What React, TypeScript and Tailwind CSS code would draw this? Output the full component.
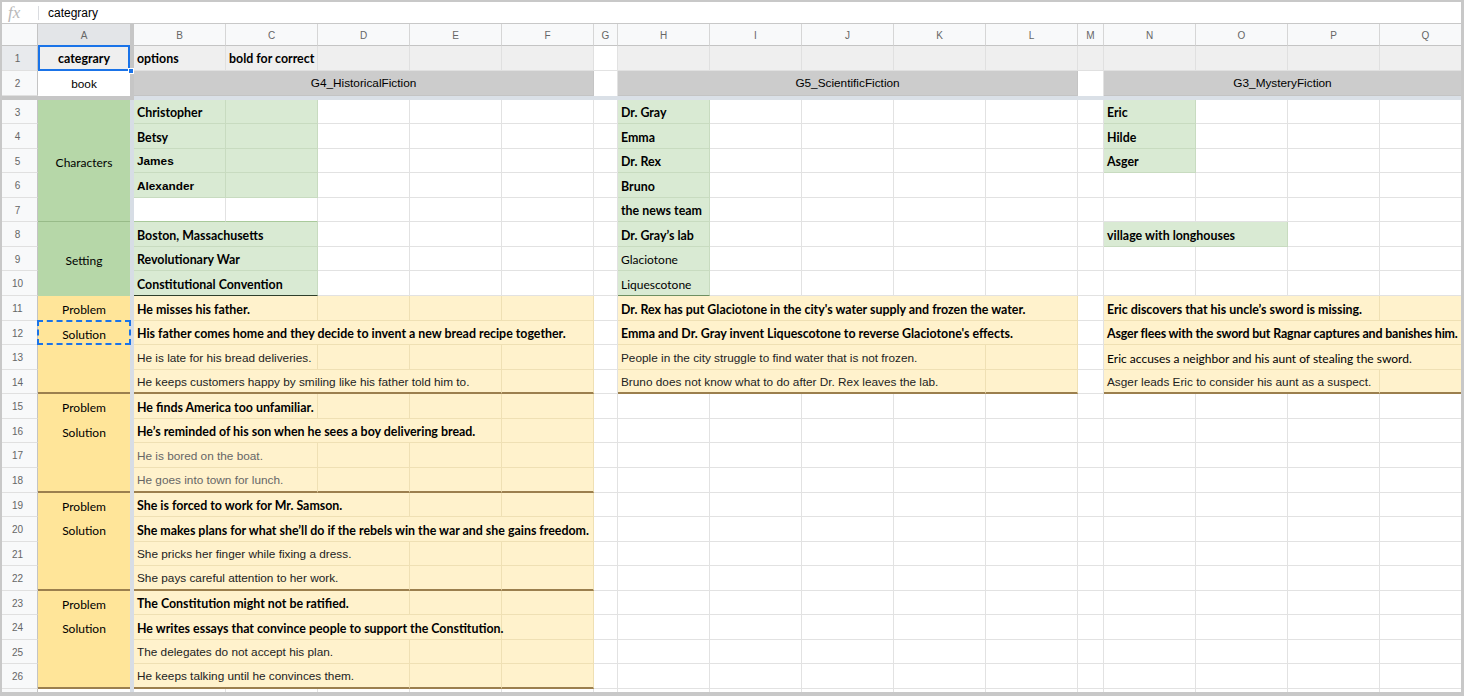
import React from 'react';

const GRID =
  'grid grid-cols-[36px_92px_4px_92px_92px_92px_92px_92px_24px_92px_92px_92px_92px_92px_26px_92px_92px_92px_92px]';

const SPAN: Record<number, string> = {
  1: 'col-span-1',
  2: 'col-span-2',
  3: 'col-span-3',
  4: 'col-span-4',
  5: 'col-span-5',
};

const F = {
  cb: "font-['Lato',sans-serif] font-bold text-[12.4px] text-black",
  cr: "font-['Lato',sans-serif] text-[12px] text-black",
  ab: "font-['Liberation_Sans',Arial,sans-serif] font-bold text-[11.8px] text-black",
  ar: "font-['Liberation_Sans',Arial,sans-serif] text-[11.8px] text-[#222]",
  ag: "font-['Liberation_Sans',Arial,sans-serif] text-[11.8px] text-[#666]",
};

const W = 'bg-white border-r border-b border-[#e2e2e2]';
const G3 = 'bg-[#d9ead3] border-r border-b border-[#c8dbc0]';
const G3D = 'bg-[#d9ead3] border-r border-r-[#c8dbc0] border-b border-b-[#2f3f2b]';
const G3H = 'bg-[#d9ead3] border-r border-r-[#c8dbc0] border-b border-b-[#6e8f62]';
const G2 = 'bg-[#b6d7a8]';
const G2L = 'bg-[#b6d7a8] border-b border-b-[#98bb89]';
const W7 = 'bg-white border-r border-r-[#e2e2e2] border-b border-b-[#a9c99b]';
const Y3 = 'bg-[#fff2cc] border-r border-b border-[#efe0b4]';
const Y3B = 'bg-[#fff2cc] border-r border-r-[#efe0b4] border-b-2 border-b-[#9b7f4e]';
const Y2 = 'bg-[#ffe599]';
const Y2B = 'bg-[#ffe599] border-b-2 border-b-[#9b7f4e]';
const R1 = 'bg-[#efefef] border-r border-b border-[#e0e0e0]';
const R2 = 'bg-[#cccccc] border-r border-b border-[#c4c4c4]';

type Spec = {
  s?: number;
  bg?: string;
  t?: string;
  f?: keyof typeof F;
  center?: boolean;
  ov?: React.ReactNode;
  x?: string;
};

const HEIGHTS = [
  'h-[24px]', 'h-[25px]', 'h-[24px]', 'h-[25px]', 'h-[24px]', 'h-[25px]', 'h-[24px]', 'h-[25px]',
  'h-[25px]', 'h-[24px]', 'h-[25px]', 'h-[24px]', 'h-[25px]', 'h-[24px]', 'h-[25px]', 'h-[25px]',
  'h-[24px]', 'h-[25px]', 'h-[24px]', 'h-[25px]', 'h-[24px]', 'h-[25px]', 'h-[24px]', 'h-[25px]',
];

function Cell({ c }: { c: Spec }) {
  const cls = [
    SPAN[c.s ?? 1],
    c.bg ?? W,
    'flex items-center whitespace-nowrap leading-[15px] min-w-0 pt-[2px]',
    c.center ? 'justify-center' : 'pl-[3px]',
    c.f ? F[c.f] : '',
    c.t || c.ov ? 'relative z-[1] overflow-visible' : 'overflow-hidden',
    c.x ?? '',
  ].join(' ');
  return (
    <div className={cls}>
      {c.t}
      {c.ov}
    </div>
  );
}

function fill(cells: Record<number, Spec>) {
  const out: { col: number; spec: Spec }[] = [];
  let col = 1;
  while (col <= 18) {
    if (col === 2) {
      col++;
      continue;
    }
    const spec = cells[col] ?? {};
    out.push({ col, spec });
    col += spec.s ?? 1;
  }
  return out;
}

function RowNum({ n, sel }: { n: React.ReactNode; sel?: boolean }) {
  return (
    <div
      className={`${
        sel ? 'bg-[#e8eaed]' : 'bg-[#f8f9fa]'
      } border-r border-r-[#c4c4c4] border-b border-b-[#e0e0e0] flex items-center justify-center pr-[4px] pt-[1px] font-['Liberation_Sans',Arial,sans-serif] text-[10px] text-[#666]`}
    >
      {n}
    </div>
  );
}

function DataRow({ n, h, cells }: { n: React.ReactNode; h: string; cells: Record<number, Spec> }) {
  const list = fill(cells);
  return (
    <div className={`${GRID} ${h}`}>
      <RowNum n={n} />
      {list.map(({ col, spec }) =>
        col === 1 ? (
          <React.Fragment key={col}>
            <Cell c={spec} />
            <div className="bg-[#d7dde5]" />
          </React.Fragment>
        ) : (
          <Cell key={col} c={spec} />
        )
      )}
    </div>
  );
}

const SolutionMarquee = (
  <div className="absolute left-[-1px] right-[-1px] top-[-1px] bottom-[0px] border-2 border-dashed border-[#1a73e8] z-10" />
);

const ROWS: Record<number, Spec>[] = [
  // 3
  { 1: { bg: G2 }, 3: { t: 'Christopher', f: 'cb', bg: G3 }, 4: { bg: G3 }, 9: { t: 'Dr. Gray', f: 'cb', bg: G3 }, 15: { t: 'Eric', f: 'cb', bg: G3 } },
  // 4
  { 1: { bg: G2 }, 3: { t: 'Betsy', f: 'cb', bg: G3 }, 4: { bg: G3 }, 9: { t: 'Emma', f: 'cb', bg: G3 }, 15: { t: 'Hilde', f: 'cb', bg: G3 } },
  // 5
  { 1: { bg: G2, t: 'Characters', f: 'cr', center: true }, 3: { t: 'James', f: 'ab', bg: G3 }, 4: { bg: G3 }, 9: { t: 'Dr. Rex', f: 'cb', bg: G3 }, 15: { t: 'Asger', f: 'cb', bg: G3 } },
  // 6
  { 1: { bg: G2 }, 3: { t: 'Alexander', f: 'ab', bg: G3 }, 4: { bg: G3 }, 9: { t: 'Bruno', f: 'cb', bg: G3 } },
  // 7
  { 1: { bg: G2L }, 3: { bg: W7 }, 4: { bg: W7 }, 9: { t: 'the news team', f: 'cb', bg: G3 } },
  // 8
  { 1: { bg: G2 }, 3: { t: 'Boston, Massachusetts', f: 'cb', bg: G3, s: 2 }, 9: { t: 'Dr. Gray\u2019s lab', f: 'cb', bg: G3 }, 15: { t: 'village with longhouses', f: 'cb', bg: G3, s: 2 } },
  // 9
  { 1: { bg: G2, t: 'Setting', f: 'cr', center: true }, 3: { t: 'Revolutionary War', f: 'cb', bg: G3, s: 2 }, 9: { t: 'Glaciotone', f: 'cr', bg: G3 } },
  // 10
  { 1: { bg: G2 }, 3: { t: 'Constitutional Convention', f: 'cb', bg: G3D, s: 2 }, 9: { t: 'Liquescotone', f: 'cr', bg: G3H } },
  // 11
  {
    1: { bg: Y2, t: 'Problem', f: 'cr', center: true },
    3: { t: 'He misses his father.', f: 'cb', bg: Y3, s: 2 },
    5: { bg: Y3 }, 6: { bg: Y3 }, 7: { bg: Y3 },
    9: { t: "Dr. Rex has put Glaciotone in the city's water supply and frozen the water.", f: 'cb', bg: Y3, s: 5 },
    15: { t: 'Eric discovers that his uncle\u2019s sword is missing.', f: 'cb', bg: Y3, s: 3 },
    18: { bg: Y3 },
  },
  // 12
  {
    1: { bg: Y2, t: 'Solution', f: 'cr', center: true, ov: SolutionMarquee },
    3: { t: 'His father comes home and they decide to invent a new bread recipe together.', f: 'cb', bg: Y3, s: 5 },
    9: { t: "Emma and Dr. Gray invent Liquescotone to reverse Glaciotone's effects.", f: 'cb', bg: Y3, s: 5 },
    15: { t: 'Asger flees with the sword but Ragnar captures and banishes him.', f: 'cb', bg: Y3, s: 4, x: 'tracking-[-0.15px]' },
  },
  // 13
  {
    1: { bg: Y2 },
    3: { t: 'He is late for his bread deliveries.', f: 'ar', bg: Y3, s: 2 },
    5: { bg: Y3 }, 6: { bg: Y3 }, 7: { bg: Y3 },
    9: { t: 'People in the city struggle to find water that is not frozen.', f: 'ar', bg: Y3, s: 4 },
    13: { bg: Y3 },
    15: { t: 'Eric accuses a neighbor and his aunt of stealing the sword.', f: 'cr', bg: Y3, s: 4 },
  },
  // 14
  {
    1: { bg: Y2B },
    3: { t: 'He keeps customers happy by smiling like his father told him to.', f: 'ar', bg: Y3B, s: 4 },
    7: { bg: Y3B },
    9: { t: 'Bruno does not know what to do after Dr. Rex leaves the lab.', f: 'ar', bg: Y3B, s: 4 },
    13: { bg: Y3B },
    15: { t: 'Asger leads Eric to consider his aunt as a suspect.', f: 'ar', bg: Y3B, s: 3 },
    18: { bg: Y3B },
  },
  // 15
  { 1: { bg: Y2, t: 'Problem', f: 'cr', center: true }, 3: { t: 'He finds America too unfamiliar.', f: 'cb', bg: Y3, s: 2 }, 5: { bg: Y3 }, 6: { bg: Y3 }, 7: { bg: Y3 } },
  // 16
  { 1: { bg: Y2, t: 'Solution', f: 'cr', center: true }, 3: { t: 'He\u2019s reminded of his son when he sees a boy delivering bread.', f: 'cb', bg: Y3, s: 4 }, 7: { bg: Y3 } },
  // 17
  { 1: { bg: Y2 }, 3: { t: 'He is bored on the boat.', f: 'ag', bg: Y3, s: 2 }, 5: { bg: Y3 }, 6: { bg: Y3 }, 7: { bg: Y3 } },
  // 18
  { 1: { bg: Y2B }, 3: { t: 'He goes into town for lunch.', f: 'ag', bg: Y3B, s: 2 }, 5: { bg: Y3B }, 6: { bg: Y3B }, 7: { bg: Y3B } },
  // 19
  { 1: { bg: Y2, t: 'Problem', f: 'cr', center: true }, 3: { t: 'She is forced to work for Mr. Samson.', f: 'cb', bg: Y3, s: 3 }, 6: { bg: Y3 }, 7: { bg: Y3 } },
  // 20
  { 1: { bg: Y2, t: 'Solution', f: 'cr', center: true }, 3: { t: 'She makes plans for what she\u2019ll do if the rebels win the war and she gains freedom.', f: 'cb', bg: Y3, s: 5 } },
  // 21
  { 1: { bg: Y2 }, 3: { t: 'She pricks her finger while fixing a dress.', f: 'ar', bg: Y3, s: 3 }, 6: { bg: Y3 }, 7: { bg: Y3 } },
  // 22
  { 1: { bg: Y2B }, 3: { t: 'She pays careful attention to her work.', f: 'ar', bg: Y3B, s: 3 }, 6: { bg: Y3B }, 7: { bg: Y3B } },
  // 23
  { 1: { bg: Y2, t: 'Problem', f: 'cr', center: true }, 3: { t: 'The Constitution might not be ratified.', f: 'cb', bg: Y3, s: 3 }, 6: { bg: Y3 }, 7: { bg: Y3 } },
  // 24
  { 1: { bg: Y2, t: 'Solution', f: 'cr', center: true }, 3: { t: 'He writes essays that convince people to support the Constitution.', f: 'cb', bg: Y3, s: 4 }, 7: { bg: Y3 } },
  // 25
  { 1: { bg: Y2 }, 3: { t: 'The delegates do not accept his plan.', f: 'ar', bg: Y3, s: 3 }, 6: { bg: Y3 }, 7: { bg: Y3 } },
  // 26
  { 1: { bg: Y2B }, 3: { t: 'He keeps talking until he convinces them.', f: 'ar', bg: Y3B, s: 3 }, 6: { bg: Y3B }, 7: { bg: Y3B } },
];

const LETTERS = ['B', 'C', 'D', 'E', 'F', 'G', 'H', 'I', 'J', 'K', 'L', 'M', 'N', 'O', 'P', 'Q'];

export default function App() {
  const head = "font-['Liberation_Sans',Arial,sans-serif] text-[10px] text-[#666] pt-[2px]";
  return (
    <div className="w-[1464px] h-[696px] overflow-hidden bg-white border-t-2 border-l-2 border-r-[3px] border-b-[4px] border-[#c8c8c8]">
      {/* formula bar */}
      <div className="h-[22px] flex items-center border-b border-[#c8c8c8] bg-white">
        <div className="w-[36px] pl-[6px] font-['Liberation_Serif',serif] italic text-[17px] leading-none text-[#b8b8b8]">
          fx
        </div>
        <div className="w-px h-[14px] bg-[#dadce0]" />
        <div className="pl-[9px] font-['Liberation_Sans',Arial,sans-serif] text-[12px] text-black">categrary</div>
      </div>

      {/* column headers */}
      <div className={`${GRID} h-[22px]`}>
        <div className="bg-[#f8f9fa] border-r border-r-[#c4c4c4] border-b border-b-[#c4c4c4]" />
        <div className={`bg-[#e3e5e8] border-b border-b-[#c4c4c4] flex items-center justify-center ${head}`}>A</div>
        <div className="bg-[#c6c6c6]" />
        {LETTERS.map((l) => (
          <div
            key={l}
            className={`bg-[#f8f9fa] border-r border-r-[#d6d6d6] border-b border-b-[#c4c4c4] flex items-center justify-center ${head}`}
          >
            {l}
          </div>
        ))}
      </div>

      {/* row 1 */}
      <div className={`${GRID} h-[25px]`}>
        <RowNum n={1} sel />
        <div className={`${R1} border-r-0 relative flex items-center justify-center pt-[2px] ${F.cb}`}>
          categrary
          <div className="absolute left-0 right-0 top-[-1px] bottom-[-1px] border-2 border-[#1a73e8] z-10" />
          <div className="absolute right-[-4px] bottom-[-4px] w-[6px] h-[6px] bg-[#1a73e8] border border-white z-20" />
        </div>
        <div className="bg-[#c6c6c6]" />
        <div className={`${R1} flex items-center pl-[3px] pt-[2px] ${F.cb}`}>options</div>
        <div className={`${R1} relative z-[1] flex items-center pl-[3px] pt-[2px] whitespace-nowrap ${F.cb}`}>bold for correct</div>
        <div className={R1} />
        <div className={R1} />
        <div className={R1} />
        <div className={W} />
        <div className={R1} />
        <div className={R1} />
        <div className={R1} />
        <div className={R1} />
        <div className={R1} />
        <div className={R1} />
        <div className={R1} />
        <div className={R1} />
        <div className={R1} />
        <div className={R1} />
      </div>

      {/* row 2 */}
      <div className={`${GRID} h-[25px]`}>
        <RowNum n={2} />
        <div className={`bg-white flex items-center justify-center pt-[2px] ${F.ar} text-black`}>book</div>
        <div className="bg-[#c6c6c6]" />
        <div className={`${R2} col-span-5 flex items-center justify-center pt-[2px] ${F.ar} text-black`}>G4_HistoricalFiction</div>
        <div className="bg-white border-r border-[#e2e2e2]" />
        <div className={`${R2} col-span-5 flex items-center justify-center pt-[2px] ${F.ar} text-black`}>G5_ScientificFiction</div>
        <div className="bg-white border-r border-[#e2e2e2]" />
        <div className={`${R2} col-span-4 flex items-center justify-center pt-[2px] ${F.ar} text-black`}>
          <span className="pr-[10px]">G3_MysteryFiction</span>
        </div>
      </div>

      {/* frozen separator */}
      <div className={`${GRID} h-[4px]`}>
        <div className="bg-[#c6c6c6]" />
        <div className="bg-[#c6c6c6]" />
        <div className="bg-[#c6c6c6]" />
        <div className="col-span-16 bg-[#dae0e7]" />
      </div>

      {ROWS.map((cells, i) => (
        <DataRow key={i} n={i + 3} h={HEIGHTS[i]} cells={cells} />
      ))}

      <DataRow n="" h="h-[24px]" cells={{ 1: { bg: 'bg-white' } }} />
    </div>
  );
}
